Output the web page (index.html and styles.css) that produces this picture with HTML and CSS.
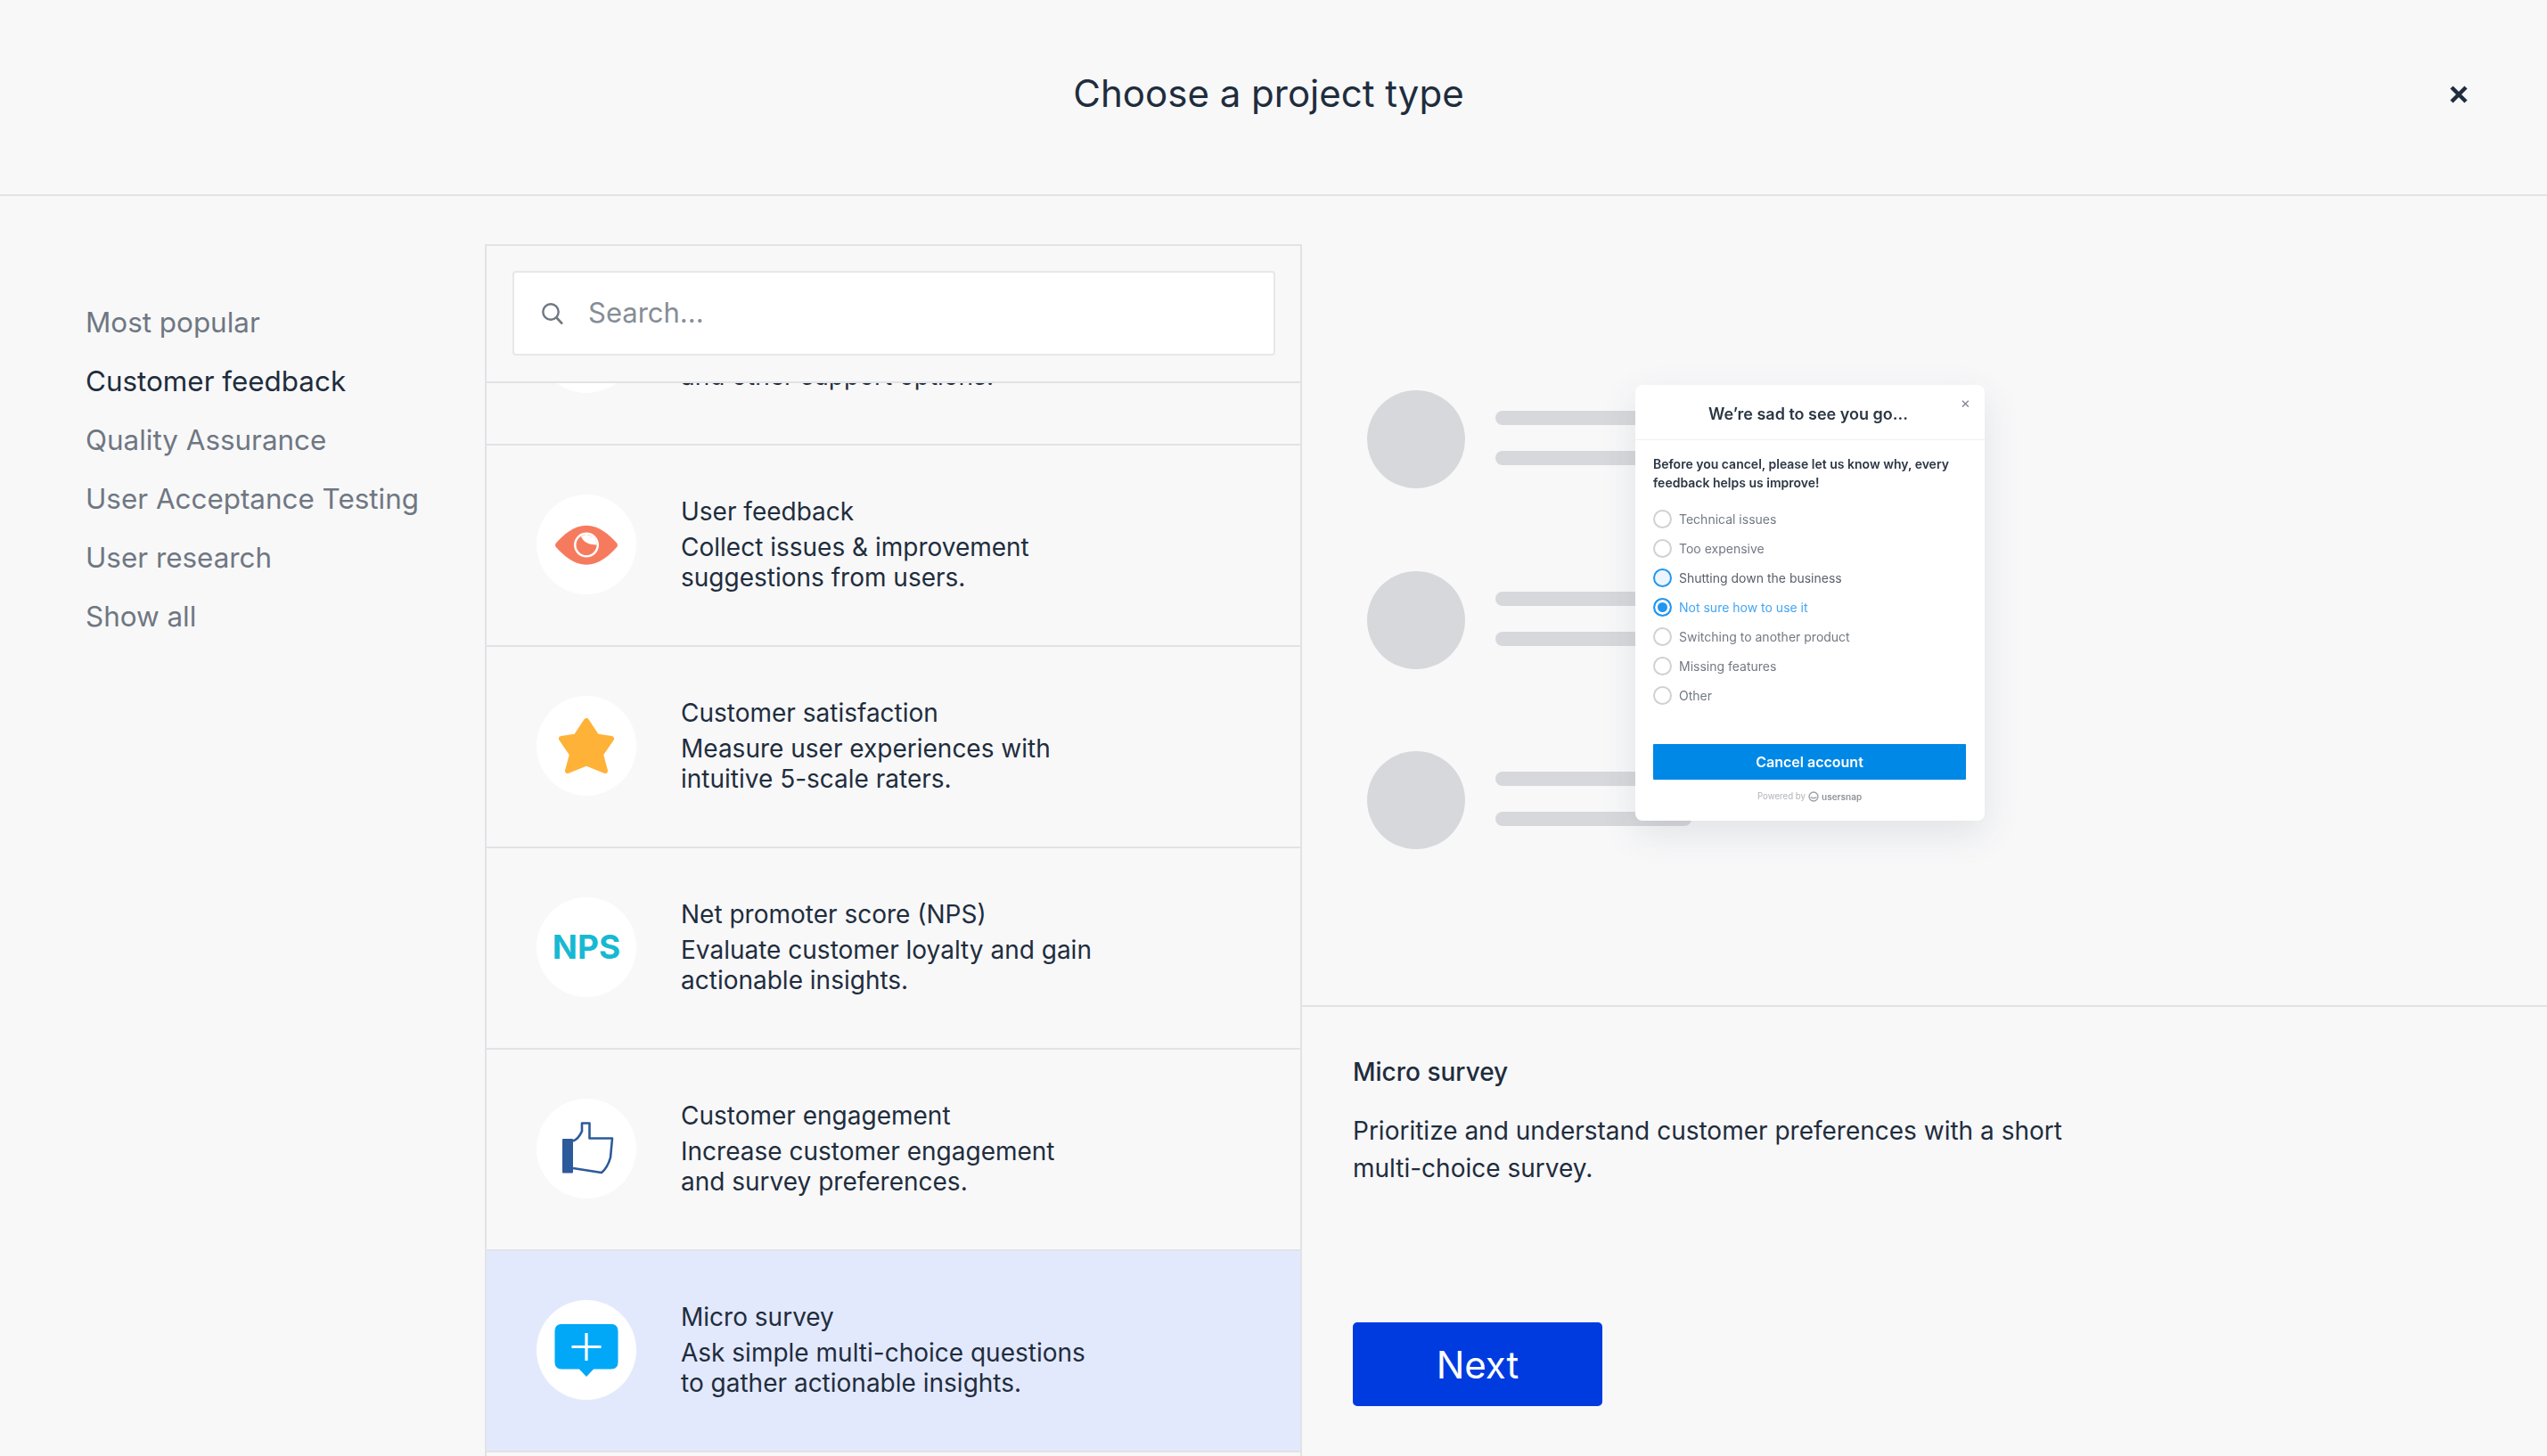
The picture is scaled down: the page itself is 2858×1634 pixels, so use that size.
FILE: index.html
```html
<!DOCTYPE html>
<html lang="en">
<head>
<meta charset="utf-8">
<title>Choose a project type</title>
<link rel="stylesheet" href="styles.css">
</head>
<body>
<div class="app">
  <header class="header">
    <h1 class="header-title">Choose a project type</h1>
    <button class="close" aria-label="Close">
      <svg width="20" height="20" viewBox="0 0 20 20"><path d="M2 2 18 18M18 2 2 18" stroke="#1f2d3d" stroke-width="4.500"/></svg>
    </button>
  </header>
  <main class="main">
    <nav class="nav">
      <a class="nav-item">Most popular</a>
      <a class="nav-item nav-active">Customer feedback</a>
      <a class="nav-item">Quality Assurance</a>
      <a class="nav-item">User Acceptance Testing</a>
      <a class="nav-item">User research</a>
      <a class="nav-item">Show all</a>
    </nav>
    <section class="panel">
      <div class="search-wrap">
        <div class="search">
          <svg class="search-icon" width="24" height="24" viewBox="0 0 24 24"><circle cx="10" cy="10" r="8.700" fill="none" stroke="#6f7782" stroke-width="2.400"/><path d="M16.500 16.500 23 23.500" stroke="#6f7782" stroke-width="2.600"/></svg>
          <span class="search-text">Search...</span>
        </div>
      </div>
      <div class="list">
        <div class="row row-scrolled">
          <div class="badge"></div>
          <div class="row-text row-text-tail">
            <div>and other support options.</div>
          </div>
        </div>
        <div class="row">
          <div class="badge">
            <svg width="112" height="112" viewBox="0 0 112 112">
              <path d="M21.500 55C30 45 42 34.700 56 34.700S82 45 90.500 55Q91.500 56.700 90.500 58.400C82 68 70 78.700 56 78.700S30 68 21.500 58.400Q20.500 56.700 21.500 55Z" fill="#f67b5e"/>
              <circle cx="56" cy="56.600" r="14" fill="#fff"/>
              <circle cx="56" cy="56.600" r="11.500" fill="#f67b5e"/>
              <path d="M50 46.800Q53 56 67.500 56.600A11.500 11.500 0 0 0 50 46.800Z" fill="#fff"/>
            </svg>
          </div>
          <div class="row-text">
            <div>User feedback</div>
            <div>Collect issues &amp; improvement</div>
            <div>suggestions from users.</div>
          </div>
        </div>
        <div class="row">
          <div class="badge">
            <svg width="112" height="112" viewBox="0 0 112 112">
              <path d="M56 28 44.500 45.500 28 48 40 65.500 35 84 56 75.500 77 84 72 65.500 84 48 67.500 45.500Z" fill="#ffb238" stroke="#ffb238" stroke-width="6" stroke-linejoin="round"/>
            </svg>
          </div>
          <div class="row-text">
            <div>Customer satisfaction</div>
            <div>Measure user experiences with</div>
            <div>intuitive 5-scale raters.</div>
          </div>
        </div>
        <div class="row">
          <div class="badge"><span class="nps">NPS</span></div>
          <div class="row-text">
            <div>Net promoter score (NPS)</div>
            <div>Evaluate customer loyalty and gain</div>
            <div>actionable insights.</div>
          </div>
        </div>
        <div class="row">
          <div class="badge">
            <svg width="112" height="112" viewBox="0 0 112 112">
              <path d="M41 47.500C45 46 49 41 51 36.500V27.500H59.500V44.500H85L83 66C81 73 78 79 73 83L41 78" fill="none" stroke="#2d5a9b" stroke-width="2.600" stroke-linejoin="round"/>
              <rect x="29" y="45" width="12" height="38.500" rx="1" fill="#2d5a9b"/>
            </svg>
          </div>
          <div class="row-text">
            <div>Customer engagement</div>
            <div>Increase customer engagement</div>
            <div>and survey preferences.</div>
          </div>
        </div>
        <div class="row row-selected">
          <div class="badge">
            <svg width="112" height="112" viewBox="0 0 112 112">
              <path d="M28 27.500H84Q91 27.500 91 34.500V70Q91 77 84 77H64L56 85.500 48 77H28Q21 77 21 70V34.500Q21 27.500 28 27.500Z" fill="#00a8f7" stroke="#00a8f7" stroke-linejoin="round"/>
              <path d="M39.500 52.500H72.500M56 37V68" stroke="#fff" stroke-width="3.200"/>
            </svg>
          </div>
          <div class="row-text">
            <div>Micro survey</div>
            <div>Ask simple multi-choice questions</div>
            <div>to gather actionable insights.</div>
          </div>
        </div>
      </div>
    </section>
    <section class="detail">
      <div class="preview">
        <div class="sketch">
          <div class="sketch-row"><div class="sketch-dot"></div><div class="sketch-bars"><div class="sketch-bar"></div><div class="sketch-bar"></div></div></div>
          <div class="sketch-row"><div class="sketch-dot"></div><div class="sketch-bars"><div class="sketch-bar"></div><div class="sketch-bar"></div></div></div>
          <div class="sketch-row"><div class="sketch-dot"></div><div class="sketch-bars"><div class="sketch-bar"></div><div class="sketch-bar"></div></div></div>
          <div class="widget">
            <div class="widget-head">We’re sad to see you go...<span class="widget-close">×</span></div>
            <div class="widget-body">
              <p class="widget-q">Before you cancel, please let us know why, every feedback helps us improve!</p>
              <div class="opts">
                <div class="opt"><span class="radio"></span>Technical issues</div>
                <div class="opt"><span class="radio"></span>Too expensive</div>
                <div class="opt opt-hover"><span class="radio radio-hover"></span>Shutting down the business</div>
                <div class="opt opt-on"><span class="radio radio-on"></span>Not sure how to use it</div>
                <div class="opt"><span class="radio"></span>Switching to another product</div>
                <div class="opt"><span class="radio"></span>Missing features</div>
                <div class="opt"><span class="radio"></span>Other</div>
              </div>
              <div class="widget-btn">Cancel account</div>
              <div class="powered">Powered by
                <svg width="12" height="12" viewBox="0 0 12 12"><circle cx="6" cy="6" r="5" fill="none" stroke="#9a9ea4" stroke-width="1.300"/><path d="M2.500 6.500Q6 9 9.500 6.500" fill="none" stroke="#9a9ea4" stroke-width="1.300"/></svg>
                <b class="powered-brand">usersnap</b>
              </div>
            </div>
          </div>
        </div>
      </div>
      <div class="info">
        <h2 class="info-title">Micro survey</h2>
        <p class="info-desc">Prioritize and understand customer preferences with a short multi-choice survey.</p>
        <button class="next">Next</button>
      </div>
    </section>
  </main>
</div>
</body>
</html>
```
FILE: styles.css
```css
* { box-sizing: border-box; }
html, body { margin: 0; height: 100%; }
body {
  background: #f8f8f9;
  color: #1f2d3d;
  font-family: Inter, "Liberation Sans", sans-serif;
  overflow: hidden;
}
.app { width: 2858px; height: 1634px; overflow: hidden; display: flex; flex-direction: column; }

.header {
  height: 220px;
  flex: none;
  border-bottom: 2px solid #e2e3e5;
  display: flex;
  align-items: center;
  justify-content: center;
  position: relative;
  padding: 0 11px 8px 0;
}
.header-title { margin: 0; font-size: 42px; font-weight: 400; line-height: 54px; }
.close {
  position: absolute;
  left: 2749px;
  top: 96px;
  width: 20px;
  height: 20px;
  padding: 0;
  border: 0;
  background: none;
  display: block;
}
.close svg { display: block; }

.main { flex: 1; display: flex; min-height: 0; }

.nav {
  width: 544px;
  flex: none;
  padding: 109px 0 0 96px;
  display: flex;
  flex-direction: column;
}
.nav-item { font-size: 31.400px; line-height: 66px; color: #6f7782; white-space: nowrap; }
.nav-active { color: #1f2d3d; }

.panel {
  width: 917px;
  flex: none;
  margin-top: 54px;
  border: solid #e2e3e5;
  border-width: 2px 2px 0;
  display: flex;
  flex-direction: column;
  min-height: 0;
}
.search-wrap { height: 152px; flex: none; padding: 28px 28px 0 29px; }
.search {
  height: 95px;
  background: #fff;
  border: 2px solid #e6e7e9;
  border-radius: 4px;
  display: flex;
  align-items: center;
  padding: 0 0 0 31px;
}
.search-icon { flex: none; margin-right: 28px; }
.search-text { font-size: 31px; color: #868d96; line-height: 40px; position: relative; top: -1px; }

.list { flex: 1; overflow: hidden; border-top: 2px solid #e2e3e5; min-height: 0; }
.row {
  height: 226px;
  border-bottom: 2px solid #e2e3e5;
  display: flex;
  align-items: center;
  padding: 0 0 3px 56px;
}
.row-scrolled { margin-top: -156px; }
.row-selected { background: #e3e9fd; }
.badge {
  width: 112px;
  height: 112px;
  flex: none;
  border-radius: 50%;
  background: #fff;
  margin-right: 50px;
  display: flex;
  align-items: center;
  justify-content: center;
}
.badge svg { display: block; }
.nps { font-size: 37px; font-weight: 700; color: #17b9d2; line-height: 1; }
.row-text { font-size: 28px; line-height: 34px; color: #1f2d3d; white-space: nowrap; }
.row-text div:first-child { margin-bottom: 6px; }
.row-text-tail { padding-top: 74px; }
.row-text-tail div:first-child { margin-bottom: 0; }

.detail { flex: 1; min-width: 0; display: flex; flex-direction: column; }
.preview { height: 910px; flex: none; border-bottom: 2px solid #e2e3e5; padding: 218px 0 0 73px; }
.sketch {
  position: relative;
  display: flex;
  flex-direction: column;
  gap: 92.500px;
  filter: blur(0.500px);
}
.sketch-row { display: flex; gap: 34px; height: 110px; }
.sketch-dot { width: 110px; height: 110px; border-radius: 50%; background: #d7d8db; flex: none; }
.sketch-bars { width: 220px; padding-top: 23px; display: flex; flex-direction: column; gap: 29px; }
.sketch-bar { height: 16px; border-radius: 8px; background: #d7d8db; }

.widget {
  position: absolute;
  left: 301px;
  top: -6px;
  width: 392px;
  height: 489px;
  background: #fff;
  border-radius: 8px;
  box-shadow: 0 14px 40px rgba(60, 70, 90, 0.12);
  color: #2b3644;
}
.widget-head {
  height: 62px;
  border-bottom: 1px solid #eeeff1;
  display: flex;
  align-items: center;
  justify-content: center;
  font-size: 18px;
  font-weight: 600;
  padding: 4px 4px 0 0;
  position: relative;
}
.widget-close { position: absolute; right: 16px; top: 10px; font-size: 17px; font-weight: 400; color: #80868e; line-height: 20px; }
.widget-body { padding: 16px 21px 0 20px; }
.widget-q { margin: 0; font-size: 14px; font-weight: 600; line-height: 21px; }
.opts { margin-top: 14px; display: flex; flex-direction: column; }
.opt { height: 33px; display: flex; align-items: center; font-size: 14px; color: #737983; }
.opt-hover { color: #59606a; }
.opt-on { color: #45a5f2; }
.radio {
  width: 21px;
  height: 21px;
  border-radius: 50%;
  border: 2px solid #cfd1d4;
  background: #fff;
  margin-right: 8px;
  flex: none;
}
.radio-hover { border-color: #2196f0; background: #ecf5fd; }
.radio-on { border-color: #2196f0; background: #2196f0; box-shadow: inset 0 0 0 3px #fff; }
.widget-btn {
  margin-top: 38px;
  height: 40px;
  background: #0088e6;
  border-radius: 1px;
  color: #fff;
  font-size: 16px;
  font-weight: 600;
  display: flex;
  align-items: center;
  justify-content: center;
}
.powered {
  margin-top: 12px;
  display: flex;
  align-items: center;
  justify-content: center;
  gap: 3px;
  font-size: 9.700px;
  color: #b0b3b8;
  line-height: 14px;
}
.powered-brand { color: #90949a; font-weight: 600; font-size: 10px; }

.info { padding: 56px 0 0 57px; }
.info-title { margin: 0; font-size: 28px; font-weight: 500; line-height: 34px; }
.info-desc { margin: 28px 0 0; width: 830px; font-size: 28px; line-height: 42px; }
.next {
  display: block;
  margin-top: 152px;
  width: 280px;
  height: 94px;
  background: #003be0;
  color: #fff;
  border: 0;
  border-radius: 5px;
  font: 400 42px Inter, "Liberation Sans", sans-serif;
}
```
